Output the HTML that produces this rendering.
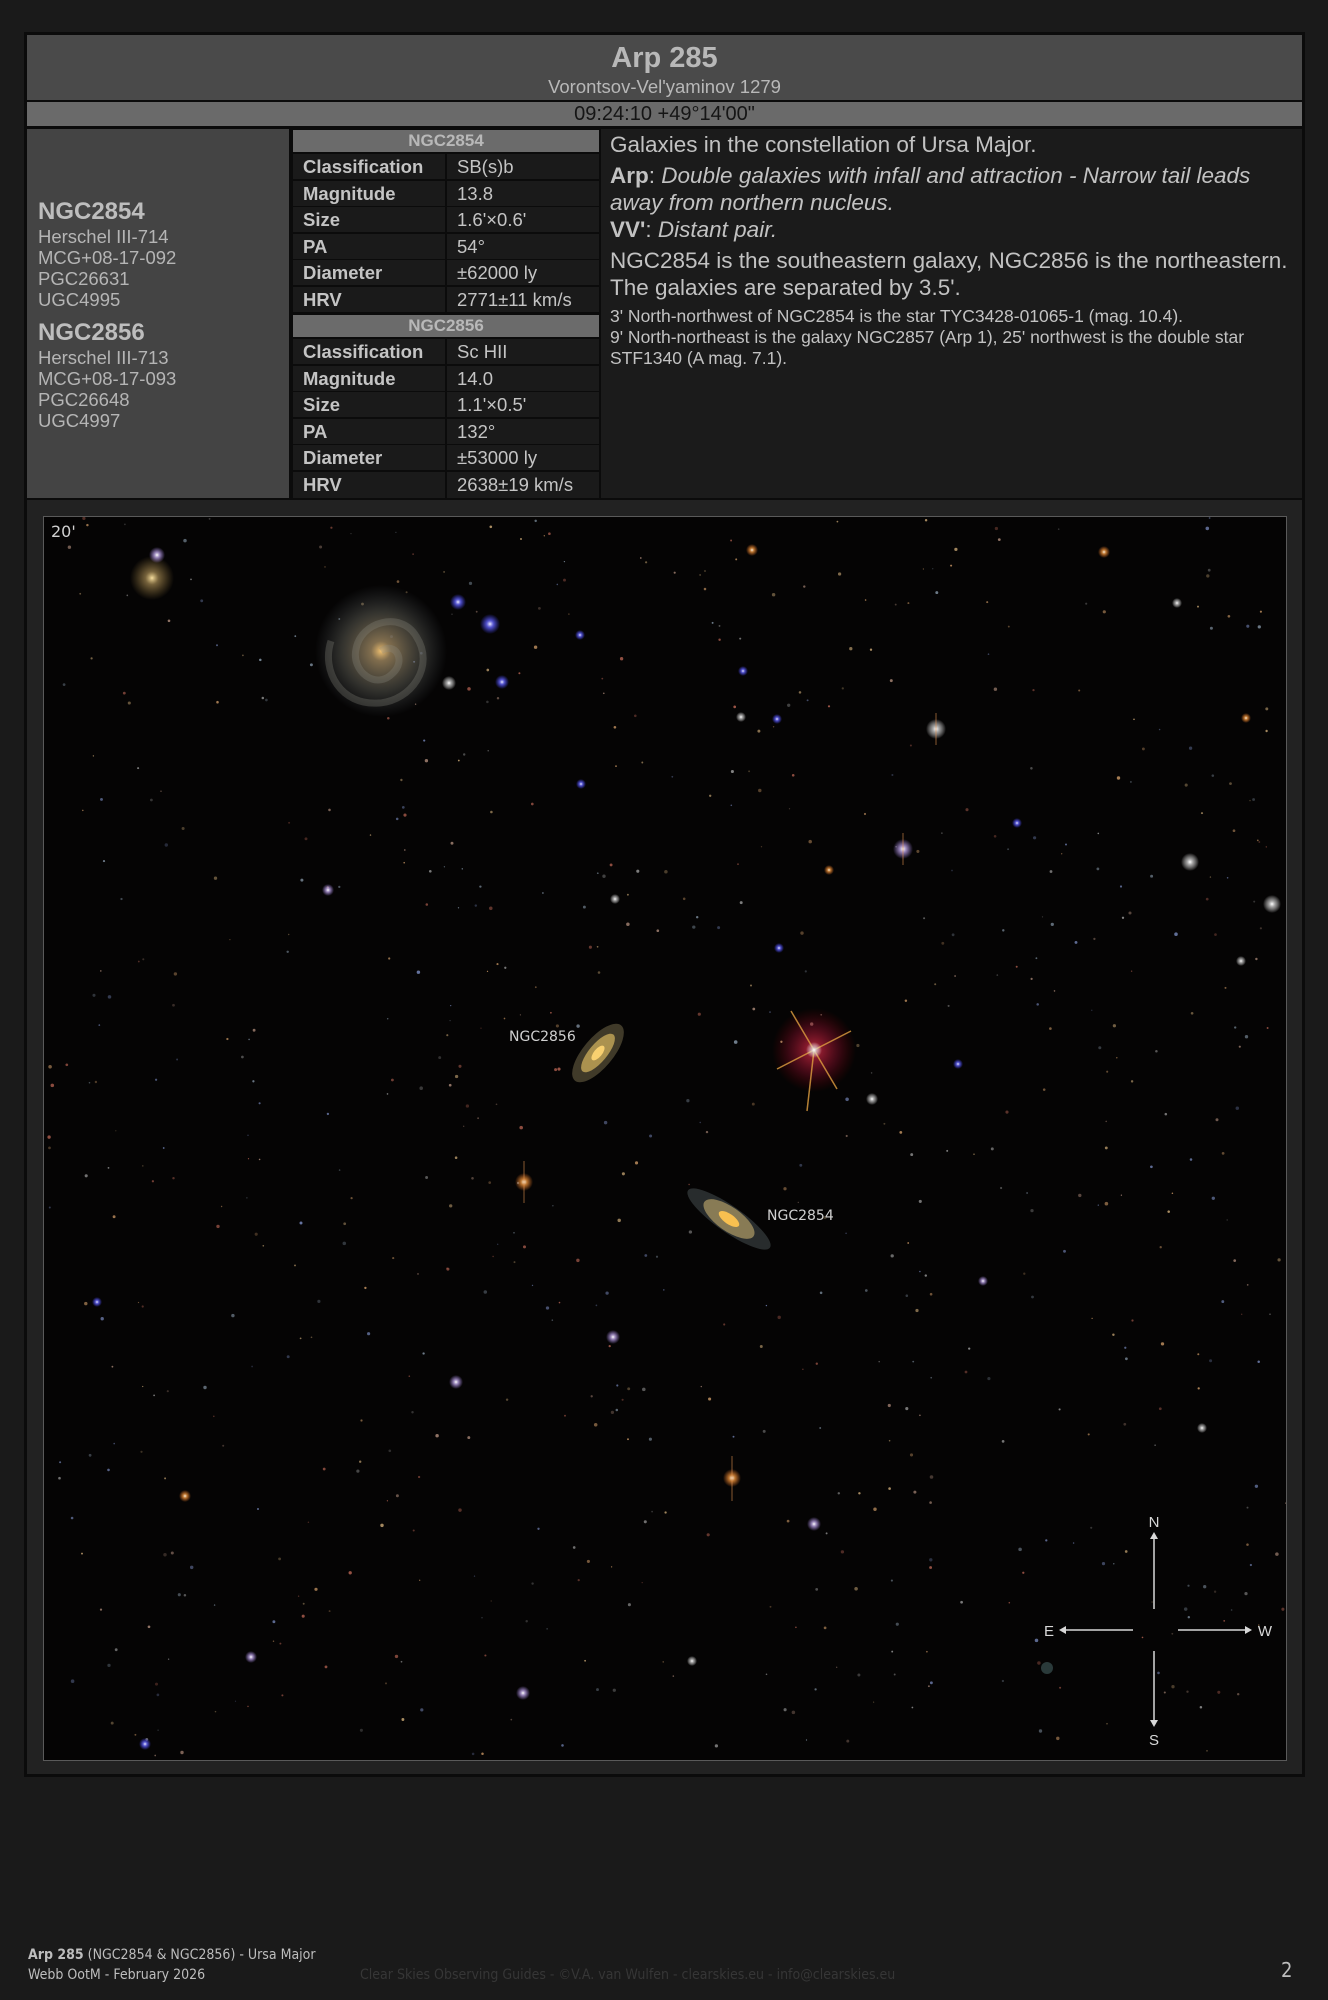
<!DOCTYPE html>
<html><head><meta charset="utf-8">
<style>
*{margin:0;padding:0;box-sizing:border-box}
body{width:1328px;height:2000px;background:#1a1a1a;font-family:"Liberation Sans",Arial,sans-serif;position:relative;overflow:hidden;color:#bdbdbd}
.abs{position:absolute}
#outer{left:24px;top:32px;width:1281px;height:1745px;background:#0b0b0b}
#title{left:27px;top:35px;width:1275px;height:65px;background:#4a4a4a;text-align:center}
#coord{left:27px;top:102px;width:1275px;height:24px;background:#6a6a6a;text-align:center;font-size:20px;line-height:24px;color:#151515}
#left{left:27px;top:129px;width:262px;height:369px;background:#444}
.nm{position:absolute;left:11px;font-size:24px;font-weight:bold;color:#bdbdbd}
.al{position:absolute;left:11px;font-size:18.5px;color:#b5b5b5;line-height:21px}
#tbl{left:293px;top:129px;width:306px;height:369px;background:#0b0b0b}
.hd{position:absolute;left:0;width:306px;height:22px;background:#6b6b6b;color:#b8b8b8;font-weight:bold;font-size:17px;text-align:center;line-height:22px}
.row{position:absolute;left:0;width:306px;height:25px}
.row .l{position:absolute;left:0;width:152px;height:25px;background:#1a1a1a;font-weight:bold;font-size:18.5px;color:#c4c4c4;padding-left:10px;line-height:25px;white-space:nowrap}
.row .v{position:absolute;left:154px;width:152px;height:25px;background:#1a1a1a;font-size:18.5px;color:#c4c4c4;padding-left:10px;line-height:25px;white-space:nowrap}
#txt{left:601px;top:129px;width:701px;height:369px;background:#1b1b1b;padding:2px 9px;color:#c2c2c2}
#txt p{font-size:22.5px;line-height:27px}
#txt .s{font-size:17.5px;line-height:21px}
#pan{left:27px;top:500px;width:1275px;height:1274px;background:#222}
#photo{left:43px;top:516px;width:1244px;height:1245px;background:#050404;border:1px solid #5a5a5a;overflow:hidden}
.foot{position:absolute;font-family:"DejaVu Sans Condensed","DejaVu Sans",sans-serif;font-size:14px;color:#bdbdbd}
</style></head><body>
<div id="outer" class="abs"></div>
<div id="title" class="abs">
 <div style="position:absolute;left:0;right:0;top:7px;font-size:29px;font-weight:bold;color:#b8b8b8">Arp 285</div>
 <div style="position:absolute;left:0;right:0;top:41px;font-size:18.5px;color:#b8b8b8">Vorontsov-Vel'yaminov 1279</div>
</div>
<div id="coord" class="abs">09:24:10 +49°14'00"</div>
<div id="left" class="abs">
 <div class="nm" style="top:69px">NGC2854</div>
 <div class="al" style="top:97px">Herschel III-714<br>MCG+08-17-092<br>PGC26631<br>UGC4995</div>
 <div class="nm" style="top:190px">NGC2856</div>
 <div class="al" style="top:218px">Herschel III-713<br>MCG+08-17-093<br>PGC26648<br>UGC4997</div>
</div>
<div id="tbl" class="abs">
 <div class="hd" style="top:1px">NGC2854</div>
 <div class="row" style="top:25px"><div class="l">Classification</div><div class="v">SB(s)b</div></div>
 <div class="row" style="top:52px"><div class="l">Magnitude</div><div class="v">13.8</div></div>
 <div class="row" style="top:78px"><div class="l">Size</div><div class="v">1.6'×0.6'</div></div>
 <div class="row" style="top:105px"><div class="l">PA</div><div class="v">54°</div></div>
 <div class="row" style="top:131px"><div class="l">Diameter</div><div class="v">±62000 ly</div></div>
 <div class="row" style="top:158px"><div class="l">HRV</div><div class="v">2771±11 km/s</div></div>
 <div class="hd" style="top:186px">NGC2856</div>
 <div class="row" style="top:210px"><div class="l">Classification</div><div class="v">Sc HII</div></div>
 <div class="row" style="top:237px"><div class="l">Magnitude</div><div class="v">14.0</div></div>
 <div class="row" style="top:263px"><div class="l">Size</div><div class="v">1.1'×0.5'</div></div>
 <div class="row" style="top:290px"><div class="l">PA</div><div class="v">132°</div></div>
 <div class="row" style="top:316px"><div class="l">Diameter</div><div class="v">±53000 ly</div></div>
 <div class="row" style="top:343px;height:26px"><div class="l" style="height:26px">HRV</div><div class="v" style="height:26px">2638±19 km/s</div></div>
</div>
<div id="txt" class="abs">
 <p style="margin-bottom:4px">Galaxies in the constellation of Ursa Major.</p>
 <p><b>Arp</b>: <i>Double galaxies with infall and attraction - Narrow tail leads<br>away from northern nucleus.</i></p>
 <p style="margin-bottom:4px"><b>VV'</b>: <i>Distant pair.</i></p>
 <p style="margin-bottom:5px;white-space:nowrap">NGC2854 is the southeastern galaxy, NGC2856 is the northeastern.<br>The galaxies are separated by 3.5'.</p>
 <p class="s">3' North-northwest of NGC2854 is the star TYC3428-01065-1 (mag. 10.4).<br>9' North-northeast is the galaxy NGC2857 (Arp 1), 25' northwest is the double star<br>STF1340 (A mag. 7.1).</p>
</div>
<div id="pan" class="abs"></div>
<div id="photo" class="abs">
<svg id="sky" width="1244" height="1245" viewBox="43 516 1244 1245" xmlns="http://www.w3.org/2000/svg">
<defs>
<radialGradient id="gw"><stop offset="0" stop-color="#fff"/><stop offset=".35" stop-color="#ddd" stop-opacity=".7"/><stop offset="1" stop-color="#fff" stop-opacity="0"/></radialGradient>
<radialGradient id="gb"><stop offset="0" stop-color="#eef"/><stop offset=".35" stop-color="#66f" stop-opacity=".8"/><stop offset="1" stop-color="#44f" stop-opacity="0"/></radialGradient>
<radialGradient id="go"><stop offset="0" stop-color="#fff4e0"/><stop offset=".35" stop-color="#e8903a" stop-opacity=".8"/><stop offset="1" stop-color="#e07020" stop-opacity="0"/></radialGradient>
<radialGradient id="gp"><stop offset="0" stop-color="#fff"/><stop offset=".35" stop-color="#b8a0e0" stop-opacity=".8"/><stop offset="1" stop-color="#a080e0" stop-opacity="0"/></radialGradient>
<radialGradient id="gr"><stop offset="0" stop-color="#e0304a" stop-opacity=".8"/><stop offset=".6" stop-color="#a01030" stop-opacity=".35"/><stop offset="1" stop-color="#800" stop-opacity="0"/></radialGradient>
<radialGradient id="gy"><stop offset="0" stop-color="#f8e0a0"/><stop offset=".3" stop-color="#c0a060" stop-opacity=".6"/><stop offset="1" stop-color="#a08040" stop-opacity="0"/></radialGradient>
<radialGradient id="sp"><stop offset="0" stop-color="#f0c070"/><stop offset=".15" stop-color="#a08860" stop-opacity=".8"/><stop offset=".6" stop-color="#6a6a60" stop-opacity=".45"/><stop offset="1" stop-color="#505860" stop-opacity="0"/></radialGradient>
</defs>
<g id="faint"></g>
<circle cx="380" cy="650" r="66" fill="url(#sp)"/>
<g fill="none" stroke="#8a8a80" stroke-opacity=".3" stroke-width="7">
<path d="M380 650 C395 640 405 660 392 672 C375 690 350 670 355 648 C360 620 400 610 415 635 C435 665 410 700 378 702 C340 705 320 670 330 640"/>
</g>
<circle cx="151" cy="577" r="22" fill="url(#gy)"/>
<g transform="translate(597 1052) rotate(-50)"><ellipse rx="36" ry="15" fill="#b0a070" opacity=".35"/><ellipse rx="24" ry="9" fill="#d8b860" opacity=".7"/><ellipse rx="9" ry="4" fill="#f8d070"/></g>
<g transform="translate(728 1218) rotate(35)"><ellipse rx="50" ry="13" fill="#7a8a90" opacity=".3"/><ellipse rx="30" ry="12" fill="#c8b070" opacity=".6"/><ellipse rx="12" ry="5" fill="#f8c050"/></g>
<circle cx="813" cy="1049" r="42" fill="url(#gr)"/>
<g stroke="#e0a040" stroke-width="1.5" opacity=".8"><line x1="790" y1="1010" x2="836" y2="1088"/><line x1="850" y1="1030" x2="776" y2="1068"/><line x1="813" y1="1049" x2="806" y2="1110"/></g>
<circle cx="813" cy="1049" r="8" fill="url(#gw)"/>
<g>
<circle cx="156" cy="554" r="8" fill="url(#gp)"/>
<circle cx="489" cy="623" r="10" fill="url(#gb)"/>
<circle cx="457" cy="601" r="8" fill="url(#gb)"/>
<circle cx="501" cy="681" r="7" fill="url(#gb)"/>
<circle cx="448" cy="682" r="7" fill="url(#gw)"/>
<circle cx="935" cy="728" r="10" fill="url(#gw)"/>
<circle cx="902" cy="848" r="10" fill="url(#gp)"/>
<circle cx="1189" cy="861" r="9" fill="url(#gw)"/>
<circle cx="1271" cy="903" r="9" fill="url(#gw)"/>
<circle cx="828" cy="869" r="5" fill="url(#go)"/>
<circle cx="1103" cy="551" r="6" fill="url(#go)"/>
<circle cx="751" cy="549" r="6" fill="url(#go)"/>
<circle cx="327" cy="889" r="6" fill="url(#gp)"/>
<circle cx="523" cy="1181" r="9" fill="url(#go)"/>
<circle cx="612" cy="1336" r="7" fill="url(#gp)"/>
<circle cx="455" cy="1381" r="7" fill="url(#gp)"/>
<circle cx="731" cy="1477" r="9" fill="url(#go)"/>
<circle cx="813" cy="1523" r="7" fill="url(#gp)"/>
<circle cx="522" cy="1692" r="7" fill="url(#gp)"/>
<circle cx="250" cy="1656" r="6" fill="url(#gp)"/>
<circle cx="144" cy="1743" r="6" fill="url(#gb)"/>
<circle cx="957" cy="1063" r="5" fill="url(#gb)"/>
<circle cx="982" cy="1280" r="5" fill="url(#gp)"/>
<circle cx="871" cy="1098" r="6" fill="url(#gw)"/>
<circle cx="96" cy="1301" r="5" fill="url(#gb)"/>
<circle cx="1176" cy="602" r="5" fill="url(#gw)"/>
<circle cx="580" cy="783" r="5" fill="url(#gb)"/>
<circle cx="778" cy="947" r="5" fill="url(#gb)"/>
<circle cx="691" cy="1660" r="5" fill="url(#gw)"/>
<circle cx="184" cy="1495" r="6" fill="url(#go)"/>
<circle cx="614" cy="898" r="5" fill="url(#gw)"/>
<circle cx="740" cy="716" r="5" fill="url(#gw)"/>
<circle cx="776" cy="718" r="5" fill="url(#gb)"/>
<circle cx="742" cy="670" r="5" fill="url(#gb)"/>
<circle cx="579" cy="634" r="5" fill="url(#gb)"/>
<circle cx="1245" cy="717" r="5" fill="url(#go)"/>
<circle cx="1016" cy="822" r="5" fill="url(#gb)"/>
<circle cx="1240" cy="960" r="5" fill="url(#gw)"/>
<circle cx="1201" cy="1427" r="5" fill="url(#gw)"/>
<circle cx="1046" cy="1667" r="6" fill="#2a3a3a"/>
</g>
<g stroke="#e09050" stroke-width="1" opacity=".6">
<line x1="523" y1="1160" x2="523" y2="1202"/><line x1="731" y1="1455" x2="731" y2="1500"/><line x1="935" y1="712" x2="935" y2="744"/><line x1="902" y1="832" x2="902" y2="864"/>
</g>
<g font-family="DejaVu Sans, sans-serif" font-size="14" fill="#d0d0d0">
<text x="50" y="536" font-size="16">20'</text>
<text x="508" y="1040">NGC2856</text>
<text x="766" y="1219">NGC2854</text>
</g>
<g stroke="#d8d8d8" stroke-width="1.5" fill="#d8d8d8">
<line x1="1153" y1="1535" x2="1153" y2="1608"/><path d="M1149 1538 L1153 1531 L1157 1538Z" stroke="none"/>
<line x1="1153" y1="1650" x2="1153" y2="1722"/><path d="M1149 1719 L1153 1726 L1157 1719Z" stroke="none"/>
<line x1="1062" y1="1629" x2="1132" y2="1629"/><path d="M1065 1625 L1058 1629 L1065 1633Z" stroke="none"/>
<line x1="1177" y1="1629" x2="1247" y2="1629"/><path d="M1244 1625 L1251 1629 L1244 1633Z" stroke="none"/>
</g>
<g font-family="Liberation Sans, sans-serif" font-size="15" fill="#d8d8d8" text-anchor="middle">
<text x="1153" y="1526">N</text><text x="1153" y="1744">S</text><text x="1048" y="1635">E</text><text x="1264" y="1635">W</text>
</g>
</svg>
</div>
<div class="foot" style="left:28px;top:1947px"><b>Arp 285</b> (NGC2854 &amp; NGC2856) - Ursa Major</div>
<div class="foot" style="left:28px;top:1967px">Webb OotM - February 2026</div>
<div class="foot" style="left:360px;top:1967px;color:#363636">Clear Skies Observing Guides - ©V.A. van Wulfen - clearskies.eu - info@clearskies.eu</div>
<div class="foot" style="left:1281px;top:1958px;font-size:20px">2</div>
<script>
(function(){var g=document.getElementById('faint');var s=12345;function r(){s=(s*16807)%2147483647;return s/2147483647;}
var cols=['#a08070','#c09060','#8090a0','#b06050','#909090','#c0a070','#7080b0'];var h='';
for(var i=0;i<700;i++){var x=44+r()*1242,y=517+r()*1243,rad=0.6+r()*1.2,c=cols[Math.floor(r()*cols.length)],o=0.3+r()*0.6;
h+='<circle cx="'+x.toFixed(1)+'" cy="'+y.toFixed(1)+'" r="'+rad.toFixed(2)+'" fill="'+c+'" opacity="'+o.toFixed(2)+'"/>';}
g.innerHTML=h;})();
</script>
</body></html>
